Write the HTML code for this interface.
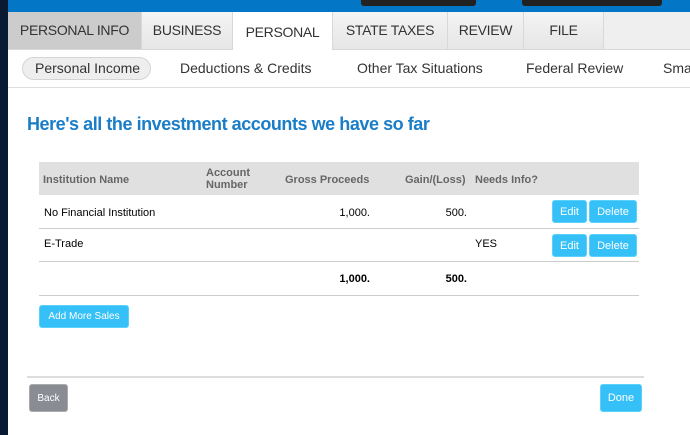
<!DOCTYPE html>
<html><head><style>
*{margin:0;padding:0;box-sizing:border-box}
body{width:690px;height:435px;overflow:hidden;background:#fff;font-family:"Liberation Sans",sans-serif;position:relative}
.abs{position:absolute}
.tab{position:absolute;top:12px;height:37px;font-size:14px;color:#333;text-align:center;line-height:37px;border-right:1px solid #d8d8d8;background:linear-gradient(#f4f4f4,#e6e6e6);letter-spacing:-0.3px}
.sub{position:absolute;top:60px;font-size:14px;color:#333}
.btn{position:absolute;background:#35c0f8;color:#fff;font-size:11px;text-align:center;border-radius:3px;border:1px solid #5ad0fa}
.row{position:absolute;left:39px;width:600px;border-bottom:1px solid #ccc;font-size:11px;color:#000}
.c{position:absolute}
.h{position:absolute;font-size:11px;font-weight:bold;color:#666}
</style></head><body>
<div class="abs" style="left:0;top:0;width:8px;height:435px;background:#0b1a33"></div>
<div class="abs" style="left:8px;top:0;width:682px;height:12px;background:#0377c5"></div>
<div class="abs" style="left:361px;top:0;width:115px;height:6px;background:#222;border-radius:0 0 3px 3px"></div>
<div class="abs" style="left:522px;top:0;width:140px;height:6px;background:#222;border-radius:0 0 3px 3px"></div>
<div class="abs" style="left:8px;top:12px;width:682px;height:38px;background:#efefef;border-bottom:1px solid #d8d8d8"></div>
<div class="tab" style="left:8px;width:134px;background:#cccccc">PERSONAL INFO</div>
<div class="tab" style="left:142px;width:91px">BUSINESS</div>
<div class="tab" style="left:233px;width:100px;background:#fff;height:38px;top:12px;line-height:40px">PERSONAL</div>
<div class="tab" style="left:333px;width:115px">STATE TAXES</div>
<div class="tab" style="left:448px;width:76px">REVIEW</div>
<div class="tab" style="left:524px;width:80px">FILE</div>
<div class="abs" style="left:8px;top:87px;width:682px;height:1px;background:#ddd"></div>
<div class="abs" style="left:22px;top:57px;width:129px;height:23px;border:1px solid #d4d4d4;border-radius:12px;background:#eee"></div>
<div class="sub" style="left:35px">Personal Income</div>
<div class="sub" style="left:180px">Deductions &amp; Credits</div>
<div class="sub" style="left:357px">Other Tax Situations</div>
<div class="sub" style="left:526px">Federal Review</div>
<div class="sub" style="left:663px">Sma</div>
<div class="abs" style="left:27px;top:114px;font-size:18px;font-weight:bold;color:#1a7dc8;letter-spacing:-0.45px">Here's all the investment accounts we have so far</div>
<div class="abs" style="left:39px;top:162px;width:600px;height:33px;background:#e0e0e0"></div>
<div class="h" style="left:43px;top:174px">Institution Name</div>
<div class="h" style="left:206px;top:167px;line-height:12px">Account<br>Number</div>
<div class="h" style="left:285px;top:174px">Gross Proceeds</div>
<div class="h" style="left:405px;top:174px">Gain/(Loss)</div>
<div class="h" style="left:475px;top:174px">Needs Info?</div>
<div class="row" style="top:195px;height:34px">
<div class="c" style="left:5px;top:12px">No Financial Institution</div>
<div class="c" style="right:269px;top:12px">1,000.</div>
<div class="c" style="right:172px;top:12px">500.</div>
</div>
<div class="btn" style="left:552px;top:200px;width:35px;height:23px;line-height:22px">Edit</div>
<div class="btn" style="left:589px;top:200px;width:48px;height:23px;line-height:22px">Delete</div>
<div class="row" style="top:229px;height:33px">
<div class="c" style="left:5px;top:9px">E-Trade</div>
<div class="c" style="left:436px;top:9px">YES</div>
</div>
<div class="btn" style="left:552px;top:234px;width:35px;height:23px;line-height:22px">Edit</div>
<div class="btn" style="left:589px;top:234px;width:48px;height:23px;line-height:22px">Delete</div>
<div class="row" style="top:262px;height:34px;font-weight:bold">
<div class="c" style="right:269px;top:11px">1,000.</div>
<div class="c" style="right:172px;top:11px">500.</div>
</div>
<div class="btn" style="left:39px;top:305px;width:90px;height:23px;line-height:22px;font-size:10px">Add More Sales</div>
<div class="abs" style="left:27px;top:376px;width:617px;height:2px;background:#ddd"></div>
<div class="btn" style="left:29px;top:384px;width:39px;height:28px;line-height:27px;background:#8a8c93;border-color:#aaa;font-size:10px">Back</div>
<div class="btn" style="left:600px;top:384px;width:42px;height:28px;line-height:27px">Done</div>
</body></html>
